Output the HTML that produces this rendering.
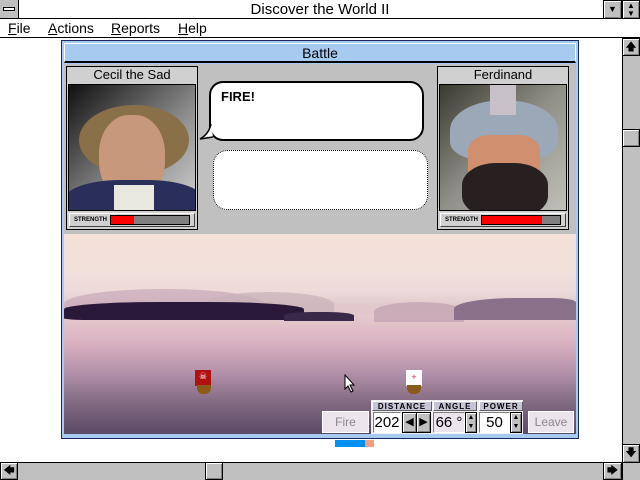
<!DOCTYPE html>
<html><head><style>
*{margin:0;padding:0;box-sizing:border-box}
body{width:640px;height:480px;overflow:hidden;background:#fff;font-family:"Liberation Sans",sans-serif;position:relative}
.a{position:absolute}
.lbl{font-size:8px;font-weight:bold;letter-spacing:1px;text-align:center;line-height:9px;background:#c8c4d8;border:1px solid #fff;border-right-color:#606060;border-bottom-color:#606060}
.val{background:#fff;border:1px solid #808080;border-right-color:#fff;border-bottom-color:#fff;font-size:15px;text-align:center;line-height:19px}
.sb{background:#c0c0c0;border:1px solid #000;box-shadow:inset 1px 1px 0 #fff,inset -1px -1px 0 #808080;font-size:11px;text-align:center;line-height:16px}
.st{font-size:6px;font-weight:bold;line-height:12px;padding-left:4px;letter-spacing:0}
</style></head><body>
<div class="a" style="left:0;top:0;width:640px;height:19px;border-bottom:1px solid #000;background:#fff"></div>
<div class="a" style="left:0;top:0;width:19px;height:19px;background:#c0c0c0;border-right:1px solid #000;border-bottom:1px solid #000"><div class="a" style="left:3px;top:7px;width:12px;height:4px;border:1px solid #000;background:#fff"></div></div>
<div class="a" style="left:0;top:0;width:640px;text-align:center;font-size:15px;line-height:19px">Discover the World II</div>
<div class="a sb" style="left:603px;top:0;width:19px;height:19px;font-size:9px">▼</div>
<div class="a sb" style="left:622px;top:0;width:18px;height:19px;font-size:8px;line-height:8px;padding-top:1px">▲<br>▼</div>
<div class="a" style="left:0;top:19px;width:640px;height:19px;border-bottom:1px solid #000;font-size:14px;line-height:18px">
<span class="a" style="left:8px"><u>F</u>ile</span><span class="a" style="left:48px"><u>A</u>ctions</span><span class="a" style="left:111px"><u>R</u>eports</span><span class="a" style="left:178px"><u>H</u>elp</span></div>
<div class="a" style="left:622px;top:39px;width:18px;height:424px;background:#c0c0c0;border-left:1px solid #000"></div>
<div class="a sb" style="left:622px;top:38px;width:18px;height:18px">🡅</div>
<div class="a sb" style="left:622px;top:129px;width:18px;height:18px"></div>
<div class="a sb" style="left:622px;top:444px;width:18px;height:19px">🡇</div>
<div class="a" style="left:0;top:462px;width:640px;height:18px;background:#c0c0c0;border-top:1px solid #000"></div>
<div class="a sb" style="left:0;top:462px;width:18px;height:18px">🡄</div>
<div class="a sb" style="left:205px;top:462px;width:18px;height:18px"></div>
<div class="a sb" style="left:603px;top:462px;width:19px;height:18px">🡆</div>
<div class="a" style="left:622px;top:462px;width:18px;height:18px;background:#c0c0c0;border-left:1px solid #000;border-top:1px solid #000"></div>
<div class="a" style="left:61px;top:40px;width:518px;height:399px;background:#a6caf0;border:1px solid #1a2a60"></div>
<div class="a" style="left:64px;top:43px;width:512px;height:20px;border:1px solid #fff;border-bottom:2px solid #000;text-align:center;font-size:14px;line-height:18px">Battle</div>
<div class="a" style="left:64px;top:64px;width:512px;height:170px;background:#c0c0c0"></div>
<div class="a" style="left:66px;top:66px;width:132px;height:164px;background:#d0d0d0;border:1px solid #000"></div>
<div class="a" style="left:66px;top:66px;width:132px;text-align:center;font-size:13px;line-height:17px">Cecil the Sad</div>
<div class="a" style="left:68px;top:84px;width:128px;height:127px;border:1px solid #000;overflow:hidden;background:linear-gradient(135deg,#101010 0%,#505050 30%,#909090 60%,#d0d0d0 100%)">
<div class="a" style="left:10px;top:20px;width:110px;height:70px;border-radius:50%;background:#8a7048"></div>
<div class="a" style="left:30px;top:30px;width:66px;height:85px;border-radius:45%;background:#c8987c"></div>
<div class="a" style="left:-5px;top:95px;width:140px;height:50px;border-radius:40% 40% 0 0;background:#2a2e5a"></div>
<div class="a" style="left:45px;top:100px;width:40px;height:30px;background:#e8e8e0"></div>
</div>
<div class="a st" style="left:69px;top:213px;width:126px;height:14px;border:1px solid #fff;border-right-color:#404040;border-bottom-color:#404040">STRENGTH</div>
<div class="a" style="left:110px;top:215px;width:80px;height:10px;background:#808080;border:1px solid #000"><div style="width:23px;height:8px;background:#f00"></div></div>
<div class="a" style="left:437px;top:66px;width:132px;height:164px;background:#d0d0d0;border:1px solid #000"></div>
<div class="a" style="left:437px;top:66px;width:132px;text-align:center;font-size:13px;line-height:17px">Ferdinand</div>
<div class="a" style="left:439px;top:84px;width:128px;height:127px;border:1px solid #000;overflow:hidden;background:linear-gradient(135deg,#3a3a30,#909088 50%,#c0c0b8)">
<div class="a" style="left:10px;top:15px;width:108px;height:60px;border-radius:50% 50% 30% 30%;background:#9aa8b8"></div>
<div class="a" style="left:50px;top:0;width:26px;height:30px;background:#c8c0c8"></div>
<div class="a" style="left:28px;top:50px;width:72px;height:50px;border-radius:30%;background:#d09070"></div>
<div class="a" style="left:22px;top:78px;width:86px;height:55px;border-radius:40%;background:#282020"></div>
</div>
<div class="a st" style="left:440px;top:213px;width:126px;height:14px;border:1px solid #fff;border-right-color:#404040;border-bottom-color:#404040">STRENGTH</div>
<div class="a" style="left:481px;top:215px;width:80px;height:10px;background:#808080;border:1px solid #000"><div style="width:60px;height:8px;background:#f00"></div></div>
<div class="a" style="left:209px;top:81px;width:215px;height:60px;background:#fff;border:2px solid #000;border-radius:14px;font-size:13px;font-weight:bold;padding:6px 10px">FIRE!</div>
<svg class="a" style="left:199px;top:124px" width="16" height="16"><path d="M12 0 Q10 10 1 15 L14 13" fill="#fff" stroke="#000" stroke-width="1.5"/></svg>
<div class="a" style="left:213px;top:150px;width:215px;height:60px;background:#fff;border:1px dotted #000;border-radius:14px"></div>
<div class="a" style="left:64px;top:234px;width:512px;height:200px;overflow:hidden;background:linear-gradient(180deg,#f4e0d8 0%,#f2e0dc 20%,#ecd8d8 30%,#e0c8cc 36%,#e4c8cc 42%,#d8b0c0 55%,#b090a8 70%,#806880 85%,#5a4a68 100%)">
<div class="a" style="left:0;top:55px;width:200px;height:30px;border-radius:50% 50% 0 0;background:#c8a8b8;opacity:.7"></div>
<div class="a" style="left:140px;top:58px;width:130px;height:25px;border-radius:50% 50% 0 0;background:#c8b0b8;opacity:.7"></div>
<div class="a" style="left:310px;top:68px;width:90px;height:20px;border-radius:50% 50% 0 0;background:#c0a0b0;opacity:.7"></div>
<div class="a" style="left:390px;top:64px;width:122px;height:22px;border-radius:50% 20% 0 0;background:#8a7088"></div>
<div class="a" style="left:0;top:68px;width:240px;height:18px;border-radius:40% 40% 10% 10%;background:#2a1838"></div>
<div class="a" style="left:220px;top:78px;width:70px;height:9px;border-radius:40% 40% 0 0;background:#3a2848"></div>
<div class="a" style="left:131px;top:136px;width:16px;height:16px;background:#b01010"><div style="color:#fff;font-size:9px;text-align:center;line-height:12px">☠</div></div>
<div class="a" style="left:133px;top:151px;width:14px;height:9px;background:#8a5a18;border-radius:0 0 6px 6px"></div>
<div class="a" style="left:342px;top:136px;width:16px;height:16px;background:#fff;color:#e02060;font-size:9px;text-align:center;line-height:14px">+</div>
<div class="a" style="left:343px;top:151px;width:14px;height:9px;background:#8a5a18;border-radius:0 0 6px 6px"></div>
<svg class="a" style="left:280px;top:140px" width="12" height="20"><path d="M1 1 L1 15 L4 12 L7 18 L9 17 L6 11 L10 11 Z" fill="#fff" stroke="#000"/></svg>
</div>
<div class="a" style="left:322px;top:411px;width:47px;height:22px;background:#ece4ec;border:1px solid #fff;font-size:12px;color:#888;text-align:center;line-height:20px">Fire</div>
<div class="a" style="left:371px;top:400px;width:152px;height:34px;background:#f0f0f0"></div>
<div class="a lbl" style="left:372px;top:401px;width:60px;height:10px">DISTANCE</div>
<div class="a lbl" style="left:433px;top:401px;width:44px;height:10px">ANGLE</div>
<div class="a lbl" style="left:479px;top:401px;width:44px;height:10px">POWER</div>
<div class="a val" style="left:373px;top:412px;width:28px;height:21px">202</div>
<div class="a sb" style="left:402px;top:412px;width:15px;height:21px;line-height:19px">◀</div>
<div class="a sb" style="left:416px;top:412px;width:15px;height:21px;line-height:19px">▶</div>
<div class="a val" style="left:433px;top:412px;width:32px;height:21px;background:#ece4ec">66 °</div>
<div class="a sb" style="left:465px;top:412px;width:12px;height:21px;font-size:7px;line-height:9px">▲<br>▼</div>
<div class="a val" style="left:479px;top:412px;width:31px;height:21px">50</div>
<div class="a sb" style="left:510px;top:412px;width:12px;height:21px;font-size:7px;line-height:9px">▲<br>▼</div>
<div class="a" style="left:528px;top:411px;width:46px;height:22px;background:#ece4ec;border:1px solid #fff;font-size:12px;color:#888;text-align:center;line-height:20px">Leave</div>
<div class="a" style="left:335px;top:440px;width:30px;height:7px;background:#0090f0"></div>
<div class="a" style="left:365px;top:440px;width:9px;height:7px;background:#f0a080"></div>
</body></html>
